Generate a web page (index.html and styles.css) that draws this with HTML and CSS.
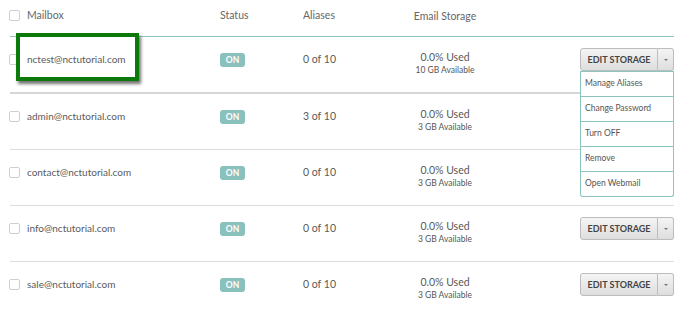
FILE: index.html
```html
<!DOCTYPE html>
<html lang="en">
<head>
    <meta charset="UTF-8">
    <meta name="viewport" content="width=device-width, initial-scale=1.0">
    <title>Mailboxes</title>
    <link rel="stylesheet" href="styles.css">
</head>
<body>
    <div class="mail-table">
        <div class="row head">
            <span class="check"></span>
            <span class="col-mailbox">Mailbox</span>
            <span class="col-status">Status</span>
            <span class="col-aliases">Aliases</span>
            <span class="col-storage">Email Storage</span>
            <span class="col-actions"></span>
        </div>

        <div class="row first">
            <span class="check"></span>
            <span class="col-mailbox">nctest@nctutorial.com</span>
            <span class="col-status"><span class="badge">ON</span></span>
            <span class="col-aliases">0 of 10</span>
            <span class="col-storage">0.0% Used<small>10 GB Available</small></span>
            <span class="col-actions">
                <span class="split-btn">
                    <button class="btn-main">EDIT STORAGE</button><button class="btn-caret"><span class="caret"></span></button>
                    <ul class="dropdown">
                        <li>Manage Aliases</li>
                        <li>Change Password</li>
                        <li>Turn OFF</li>
                        <li>Remove</li>
                        <li>Open Webmail</li>
                    </ul>
                </span>
            </span>
            <span class="highlight"></span>
        </div>

        <div class="row">
            <span class="check"></span>
            <span class="col-mailbox">admin@nctutorial.com</span>
            <span class="col-status"><span class="badge">ON</span></span>
            <span class="col-aliases">3 of 10</span>
            <span class="col-storage">0.0% Used<small>3 GB Available</small></span>
            <span class="col-actions"></span>
        </div>

        <div class="row">
            <span class="check"></span>
            <span class="col-mailbox">contact@nctutorial.com</span>
            <span class="col-status"><span class="badge">ON</span></span>
            <span class="col-aliases">0 of 10</span>
            <span class="col-storage">0.0% Used<small>3 GB Available</small></span>
            <span class="col-actions"></span>
        </div>

        <div class="row">
            <span class="check"></span>
            <span class="col-mailbox">info@nctutorial.com</span>
            <span class="col-status"><span class="badge">ON</span></span>
            <span class="col-aliases">0 of 10</span>
            <span class="col-storage">0.0% Used<small>3 GB Available</small></span>
            <span class="col-actions">
                <span class="split-btn">
                    <button class="btn-main">EDIT STORAGE</button><button class="btn-caret"><span class="caret"></span></button>
                </span>
            </span>
        </div>

        <div class="row last">
            <span class="check"></span>
            <span class="col-mailbox">sale@nctutorial.com</span>
            <span class="col-status"><span class="badge">ON</span></span>
            <span class="col-aliases">0 of 10</span>
            <span class="col-storage">0.0% Used<small>3 GB Available</small></span>
            <span class="col-actions">
                <span class="split-btn">
                    <button class="btn-main">EDIT STORAGE</button><button class="btn-caret"><span class="caret"></span></button>
                </span>
            </span>
        </div>
    </div>
</body>
</html>
```

FILE: styles.css
```css
body {
    margin: 0;
    background: #fff;
    font-family: Lato, "Open Sans", sans-serif;
    font-size: 10.5px;
    color: #5a5a5a;
}

.mail-table {
    margin-left: 10px;
    width: 664px;
}

.row {
    position: relative;
    display: grid;
    grid-template-columns: 17px 193px 83px 87px 110px 174px;
    align-items: start;
    height: 55px;
    border-bottom: 1px solid #dcdcdc;
    line-height: 14px;
}

.row > span {
    padding-top: 15px;
}

.row .col-mailbox {
    font-size: 10px;
}

.row.head {
    height: 36px;
    border-bottom: 1px solid #8cc5c0;
    color: #666;
    font-size: 11px;
}

.row.head > span,
.row.head .col-mailbox {
    padding-top: 8px;
    font-size: 10.5px;
}

.row.first {
    border-bottom: 2px solid #d6d6d6;
    z-index: 2;
}

.row.last {
    border-bottom: 0;
}

.row > .check,
.row.head > .check {
    padding: 0;
    margin-top: 17px;
    margin-left: -1px;
    width: 9px;
    height: 9px;
    border: 1px solid #cfcfcf;
    border-radius: 2px;
}

.row.head > .check {
    margin-top: 10px;
}

.col-storage {
    text-align: center;
    padding-top: 13px !important;
}

.row.head .col-storage {
    padding-top: 9px !important;
}

.col-storage small {
    display: block;
    font-size: 8.5px;
    line-height: 12px;
    color: #555;
}

.col-actions {
    display: flex;
    justify-content: flex-end;
    padding-top: 11px !important;
}

.badge {
    display: inline-block;
    width: 25px;
    height: 14px;
    line-height: 14px;
    text-align: center;
    background: #8bc1bd;
    color: #fff;
    font-size: 8.5px;
    font-weight: bold;
    border-radius: 3px;
}

.split-btn {
    position: relative;
    display: flex;
}

.split-btn button {
    height: 23px;
    margin: 0;
    border: 1px solid #bdbdbd;
    background: linear-gradient(#f4f4f4, #dedede);
    font-family: Lato, "Open Sans", sans-serif;
    color: #444;
}

.btn-main {
    width: 78px;
    padding: 0;
    font-size: 9px;
    font-weight: bold;
    border-radius: 3px 0 0 3px;
}

.btn-caret {
    width: 16px;
    padding: 0;
    border-left: 0 !important;
    border-radius: 0 3px 3px 0;
}

.caret {
    display: inline-block;
    width: 0;
    height: 0;
    border-left: 2px solid transparent;
    border-right: 2px solid transparent;
    border-top: 2px solid #777;
    vertical-align: middle;
    margin-bottom: 3px;
}

.dropdown {
    position: absolute;
    top: 23px;
    left: 0;
    width: 92px;
    margin: 0;
    padding: 0;
    list-style: none;
    background: #fff;
    border: 1px solid #8cc5c0;
    border-top: 0;
    border-radius: 0 0 3px 3px;
}

.dropdown li {
    height: 24px;
    line-height: 22px;
    padding-left: 4px;
    font-size: 8.5px;
    color: #555;
    border-top: 1px solid #8cc5c0;
}

.highlight {
    position: absolute;
    left: 6px;
    top: -4px;
    width: 115px;
    height: 40px;
    padding: 0 !important;
    border: 4px solid #0b7a0b;
    box-shadow: 2px 3px 3px rgba(0, 0, 0, 0.55);
}
```
